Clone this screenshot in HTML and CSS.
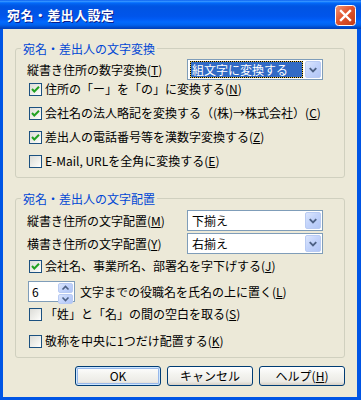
FILE: index.html
```html
<!DOCTYPE html>
<html lang="ja">
<head>
<meta charset="utf-8">
<title>宛名・差出人設定</title>
<link rel="stylesheet" href="styles.css">
</head>
<body>
<div class="window">
  <div class="titlebar">
    <span class="title">宛名・差出人設定</span>
    <span class="close" aria-label="閉じる">
      <svg width="21" height="21" viewBox="0 0 21 21">
        <defs>
          <linearGradient id="cg" x1="0" y1="0" x2="1" y2="1">
            <stop offset="0" stop-color="#F0997A"/>
            <stop offset="0.45" stop-color="#E2552F"/>
            <stop offset="1" stop-color="#C23A14"/>
          </linearGradient>
        </defs>
        <rect x="0.5" y="0.5" width="20" height="20" rx="3" fill="url(#cg)" stroke="#FFFFFF"/>
        <path d="M6 6 L15 15 M15 6 L6 15" stroke="#FFFFFF" stroke-width="2.4" stroke-linecap="square"/>
      </svg>
    </span>
  </div>
  <div class="client">
    <fieldset class="group">
      <legend>宛名・差出人の文字変換</legend>
      <div class="group-body g1">
        <div class="field-row">
          <span class="label">縦書き住所の数字変換(<u>T</u>)</span>
          <div class="combo">
            <span class="value selected">組文字に変換する</span>
            <span class="drop"><svg width="15" height="15" viewBox="0 0 15 15"><path d="M4 6 L7.5 9.5 L11 6" fill="none" stroke="#4D6185" stroke-width="2"/></svg></span>
          </div>
        </div>
        <div class="checks">
          <div class="check"><span class="box"><svg width="11" height="11" viewBox="0 0 11 11"><path d="M2 5 L4.3 7.5 L9 2.8" fill="none" stroke="#21A121" stroke-width="2"/></svg></span><span>住所の「ー」を「の」に変換する(<u>N</u>)</span></div>
          <div class="check"><span class="box"><svg width="11" height="11" viewBox="0 0 11 11"><path d="M2 5 L4.3 7.5 L9 2.8" fill="none" stroke="#21A121" stroke-width="2"/></svg></span><span>会社名の法人略記を変換する（(株)→株式会社）(<u>C</u>)</span></div>
          <div class="check"><span class="box"><svg width="11" height="11" viewBox="0 0 11 11"><path d="M2 5 L4.3 7.5 L9 2.8" fill="none" stroke="#21A121" stroke-width="2"/></svg></span><span>差出人の電話番号等を漢数字変換する(<u>Z</u>)</span></div>
          <div class="check"><span class="box"></span><span>E-Mail, URLを全角に変換する(<u>E</u>)</span></div>
        </div>
      </div>
    </fieldset>

    <fieldset class="group g2-set">
      <legend>宛名・差出人の文字配置</legend>
      <div class="group-body g2">
        <div class="field-row">
          <span class="label">縦書き住所の文字配置(<u>M</u>)</span>
          <div class="combo">
            <span class="value">下揃え</span>
            <span class="drop"><svg width="15" height="15" viewBox="0 0 15 15"><path d="M4 6 L7.5 9.5 L11 6" fill="none" stroke="#4D6185" stroke-width="2"/></svg></span>
          </div>
        </div>
        <div class="field-row gap-2">
          <span class="label">横書き住所の文字配置(<u>Y</u>)</span>
          <div class="combo">
            <span class="value">右揃え</span>
            <span class="drop"><svg width="15" height="15" viewBox="0 0 15 15"><path d="M4 6 L7.5 9.5 L11 6" fill="none" stroke="#4D6185" stroke-width="2"/></svg></span>
          </div>
        </div>
        <div class="check gap-4"><span class="box"><svg width="11" height="11" viewBox="0 0 11 11"><path d="M2 5 L4.3 7.5 L9 2.8" fill="none" stroke="#21A121" stroke-width="2"/></svg></span><span>会社名、事業所名、部署名を字下げする(<u>J</u>)</span></div>
        <div class="spin-row gap-7">
          <div class="spin">
            <span class="spin-value">6</span>
            <span class="spin-btns">
              <span class="spin-btn"><svg width="13" height="8" viewBox="0 0 13 8"><path d="M3.5 5.5 L6.5 2.5 L9.5 5.5" fill="none" stroke="#4D6185" stroke-width="1.6"/></svg></span>
              <span class="spin-btn"><svg width="13" height="8" viewBox="0 0 13 8"><path d="M3.5 2.5 L6.5 5.5 L9.5 2.5" fill="none" stroke="#4D6185" stroke-width="1.6"/></svg></span>
            </span>
          </div>
          <span class="label">文字までの役職名を氏名の上に置く(<u>L</u>)</span>
        </div>
        <div class="check gap-4"><span class="box"></span><span>「姓」と「名」の間の空白を取る(<u>S</u>)</span></div>
        <div class="check gap-11"><span class="box"></span><span>敬称を中央に1つだけ配置する(<u>K</u>)</span></div>
      </div>
    </fieldset>

    <div class="buttons">
      <button class="btn default">OK</button>
      <button class="btn">キャンセル</button>
      <button class="btn">ヘルプ(<u>H</u>)</button>
    </div>
  </div>
</div>
</body>
</html>
```

FILE: styles.css
```css
* { box-sizing: border-box; }

html, body {
  margin: 0;
  padding: 0;
  background: #FFFFFF;
}

body {
  font-family: "Noto Sans CJK JP", "Noto Sans", sans-serif;
  font-size: 12px;
  color: #000000;
}

.window {
  width: 361px;
  height: 400px;
  display: flex;
  flex-direction: column;
}

.titlebar {
  height: 29px;
  flex: none;
  display: flex;
  align-items: flex-start;
  justify-content: space-between;
  padding: 5px 5px 0 7px;
  background: linear-gradient(to bottom,
    #0058EE 0%, #3A93FF 4%, #288EFF 6%, #127DFF 8%, #0369FC 10%,
    #0262EE 14%, #0057E5 20%, #0054E3 24%, #0055EB 56%, #005BF5 66%,
    #026AFE 76%, #0062EF 86%, #0052D6 92%, #0046C4 96%, #0040B8 100%);
}

.title {
  color: #FFFFFF;
  font-weight: bold;
  font-size: 13px;
  line-height: 20px;
  letter-spacing: 0.4px;
  text-shadow: 1px 1px 0 #0A1E8C;
}

.close {
  display: block;
  width: 21px;
  height: 21px;
}

.close svg { display: block; }

.client {
  flex: 1;
  display: flex;
  flex-direction: column;
  background: #ECE9D8;
  border-style: solid;
  border-color: #0055E5;
  border-width: 0 4px 3px 3px;
  padding: 13px 12px 0 12px;
}

.group {
  margin: 0;
  padding: 0;
  border: 1px solid #D0D0BF;
  border-radius: 3px;
  min-width: 0;
}

.group legend {
  margin-left: 5px;
  padding: 0 2px;
  height: 13px;
  line-height: 13px;
  color: #0046D5;
}

.g2-set { margin-top: 14px; }

.group-body {
  display: flex;
  flex-direction: column;
  padding: 4px 21px 8px 11px;
}

.g2 { padding-top: 5px; }

.field-row {
  display: flex;
  align-items: center;
  justify-content: space-between;
  height: 21px;
}

.label { line-height: 16px; white-space: nowrap; }

.combo {
  width: 136px;
  height: 21px;
  display: flex;
  align-items: center;
  border: 1px solid #7F9DB9;
  background: #FFFFFF;
  padding: 1px;
}

.combo .value {
  flex: 1;
  height: 15px;
  line-height: 15px;
  margin: 0 3px 0 2px;
  padding-left: 1px;
  white-space: nowrap;
}

.combo .value.selected {
  background: #316AC5;
  color: #FFFFFF;
  outline: 1px dotted #000000;
  box-shadow: 0 0 0 1px #E8C850;
}

.drop {
  width: 16px;
  height: 17px;
  display: flex;
  align-items: center;
  justify-content: center;
  border: 1px solid #B9CBF3;
  border-radius: 2px;
  background: linear-gradient(135deg, #DCE6FD 0%, #C3D4FB 45%, #B2C6F6 100%);
}

.drop svg { display: block; }

.checks {
  display: flex;
  flex-direction: column;
  gap: 8px;
  margin-top: 1px;
}

.check {
  display: flex;
  align-items: center;
  gap: 3px;
  height: 16px;
  padding-left: 2px;
  line-height: 16px;
  white-space: nowrap;
}

.box {
  width: 13px;
  height: 13px;
  flex: none;
  display: flex;
  align-items: center;
  justify-content: center;
  border: 1px solid #1C5180;
  background: linear-gradient(135deg, #DCDCD7 0%, #F4F4F0 70%, #FFFFFF 100%);
}

.box svg { display: block; }

.gap-2 { margin-top: 2px; }
.gap-4 { margin-top: 4px; }
.gap-7 { margin-top: 7px; }
.gap-11 { margin-top: 11px; }

.spin-row {
  display: flex;
  align-items: center;
  gap: 5px;
  height: 21px;
  padding-left: 1px;
}

.spin {
  width: 47px;
  height: 21px;
  display: flex;
  border: 1px solid #7F9DB9;
  background: #FFFFFF;
  padding: 1px;
}

.spin-value {
  flex: 1;
  line-height: 17px;
  padding-left: 2px;
}

.spin-btns {
  width: 15px;
  display: flex;
  flex-direction: column;
  gap: 1px;
}

.spin-btn {
  flex: 1;
  display: flex;
  align-items: center;
  justify-content: center;
  border: 1px solid #B9CBF3;
  border-radius: 2px;
  background: linear-gradient(135deg, #DCE6FD 0%, #C3D4FB 45%, #B2C6F6 100%);
}

.spin-btn svg { display: block; }

.buttons {
  display: flex;
  justify-content: flex-end;
  gap: 6px;
  margin-top: 8px;
}

.btn {
  width: 86px;
  height: 20px;
  padding: 0;
  font-family: inherit;
  font-size: 12px;
  line-height: 16px;
  color: #000000;
  border: 1px solid #003C74;
  border-radius: 3px;
  background: linear-gradient(to bottom, #FFFFFF 0%, #F4F4F0 40%, #ECEBE6 80%, #D6D0C5 100%);
}

.btn.default {
  box-shadow: inset 0 0 0 1px #CEE7FF, inset 0 0 0 2px #98B8EA;
}
```
